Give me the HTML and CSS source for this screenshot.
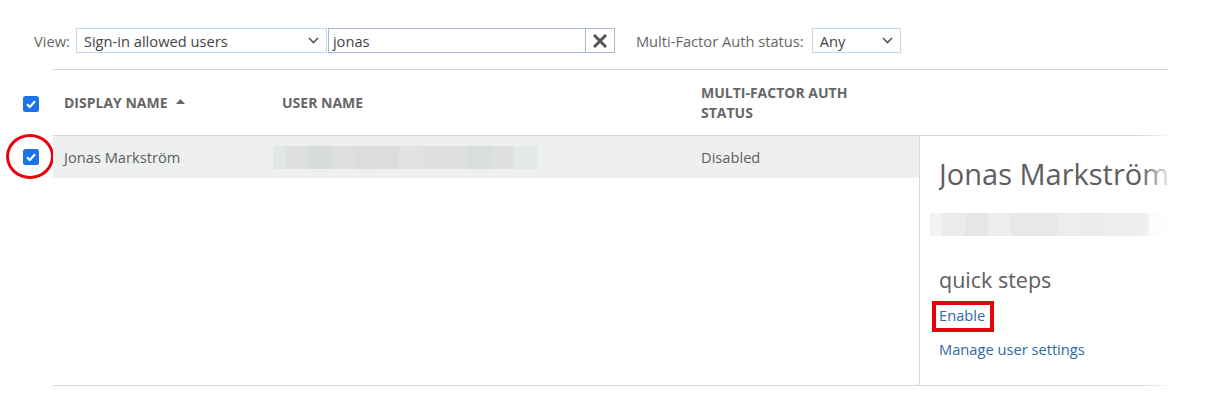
FILE: index.html
```html
<!DOCTYPE html>
<html>
<head>
<meta charset="utf-8">
<link rel="stylesheet" href="styles.css">
</head>
<body>
<div class="page">
  <div class="toolbar">
    <span class="label">View:</span>
    <div class="select select-view">
      <span>Sign-in allowed users</span>
      <svg class="chev" width="11" height="7" viewBox="0 0 11 7"><polyline points="1,1 5.5,5.5 10,1" fill="none" stroke="#555" stroke-width="1.6"/></svg>
    </div>
    <div class="search">
      <span class="search-text">jonas</span>
      <span class="search-clear"><svg width="14" height="14" viewBox="0 0 14 14"><path d="M2 2L12 12M12 2L2 12" stroke="#555" stroke-width="3" stroke-linecap="square"/></svg></span>
    </div>
    <span class="label label-mfa">Multi-Factor Auth status:</span>
    <div class="select select-any">
      <span>Any</span>
      <svg class="chev" width="11" height="7" viewBox="0 0 11 7"><polyline points="1,1 5.5,5.5 10,1" fill="none" stroke="#555" stroke-width="1.6"/></svg>
    </div>
  </div>

  <div class="grid">
    <div class="head-check">
      <span class="cb"><svg width="16" height="16" viewBox="0 0 16 16"><rect width="16" height="16" rx="2.5" fill="#1a73e8"/><path d="M4 8.2L6.8 11L12 5.2" fill="none" stroke="#fff" stroke-width="2.2"/></svg></span>
    </div>
    <div class="head">
      <div class="col col-name">DISPLAY NAME <svg class="sort" width="9" height="5" viewBox="0 0 9 5"><path d="M0 5L4.5 0L9 5Z" fill="#666"/></svg></div>
      <div class="col col-user">USER NAME</div>
      <div class="col col-mfa">MULTI-FACTOR AUTH<br>STATUS</div>
    </div>

    <div class="body-check">
      <span class="cb cb-row"><svg width="16" height="16" viewBox="0 0 16 16"><rect width="16" height="16" rx="2.5" fill="#1a73e8"/><path d="M4 8.2L6.8 11L12 5.2" fill="none" stroke="#fff" stroke-width="2.2"/></svg><span class="ring"></span></span>
    </div>
    <div class="body">
      <div class="list">
        <div class="row">
          <div class="col col-name">Jonas Markström</div>
          <div class="col col-user">
            <div class="blur blur-user">
              <i style="width:12px;background:#e3e6e6"></i><i style="background:#dedfde"></i><i style="background:#d9dcdc"></i><i style="background:#dedfde"></i><i style="background:#dbdddc"></i><i style="background:#dbdedd"></i><i style="background:#e1e3e2"></i><i style="background:#dfe0df"></i><i style="background:#dedfde"></i><i style="background:#dadddd"></i><i style="background:#dfe1e0"></i><i style="background:#e5e8e8"></i>
            </div>
          </div>
          <div class="col col-mfa">Disabled</div>
        </div>
      </div>
      <aside class="panel">
        <h1 class="panel-title">Jonas Markström</h1>
        <div class="blur blur-panel">
          <i style="width:12px;background:#f3f3f3"></i><i style="background:#ebebeb"></i><i style="background:#e6e6e6"></i><i style="background:#ededeb"></i><i style="background:#e8e8e8"></i><i style="background:#e8e8e8"></i><i style="background:#ededed"></i><i style="background:#ebebeb"></i><i style="background:#eeeeee"></i><i style="background:#eeeeee"></i><i style="background:#fafafa"></i>
        </div>
        <h2 class="panel-sub">quick steps</h2>
        <div class="links">
          <a class="link link-enable">Enable</a>
          <a class="link">Manage user settings</a>
        </div>
      </aside>
      <div class="fade"></div>
    </div>
  </div>
</div>
</body>
</html>
```
FILE: styles.css
```css
* { box-sizing: border-box; }
html, body { margin: 0; padding: 0; background: #fff; }
body {
  font-family: "Open Sans", "Noto Sans", sans-serif;
  color: #5e5e5e;
  width: 1205px;
  height: 418px;
  overflow: hidden;
}
.page { padding-top: 28px; }

.toolbar {
  display: flex;
  align-items: center;
  padding-left: 34px;
  height: 25px;
  font-size: 14.67px;
}
.label { color: #666; }
.select {
  height: 25px;
  border: 1px solid #c3d9ec;
  display: flex;
  align-items: center;
  justify-content: space-between;
  padding: 0 7px 0 7px;
  color: #444;
}
.select-view { width: 251px; margin-left: 6px; }
.select-any { width: 89px; margin-left: 8px; }
.search {
  width: 287px;
  height: 25px;
  margin-left: 1px;
  border: 1px solid #a8bacb;
  display: flex;
  align-items: center;
  justify-content: space-between;
}
.search-text { padding-left: 4px; color: #444; }
.search-clear {
  width: 29px;
  height: 23px;
  border-left: 1px solid #a8bacb;
  display: flex;
  align-items: center;
  justify-content: center;
}
.label-mfa { margin-left: 21px; }

.grid {
  display: grid;
  grid-template-columns: 53px 1115px;
  margin-top: 16px;
}
.head-check, .body-check {
  display: flex;
  justify-content: flex-end;
  padding-right: 14px;
}
.head-check { align-items: center; padding-top: 2px; }
.body-check { align-items: flex-start; padding-top: 13px; }
.cb { display: block; width: 16px; height: 16px; position: relative; }
.cb svg { display: block; }
.ring {
  position: absolute;
  left: -17px;
  top: -15px;
  width: 48px;
  height: 45px;
  border: 3.5px solid #e8000b;
  border-radius: 50%;
}

.head {
  height: 67px;
  border-top: 1px solid #d4d9dc;
  border-bottom: 1px solid #d4d9dc;
  display: flex;
  align-items: center;
  font-size: 14px;
  font-weight: 700;
  color: #666;
  line-height: 20px;
}
.col { padding-left: 11px; }
.col-name { width: 218px; display: flex; align-items: center; }
.col-user { width: 419px; }
.col-mfa { width: 229px; }
.sort { margin-left: 8px; margin-top: -2px; }

.body {
  display: flex;
  height: 250px;
  border-bottom: 1px solid #d4d9dc;
  position: relative;
}
.list { width: 866px; }
.row {
  height: 42px;
  background: #edf0ef;
  display: flex;
  align-items: center;
  font-size: 14.67px;
  color: #5e5e5e;
}
.row .col-user { padding-left: 2px; }
.blur { display: flex; height: 23px; }
.blur i { display: block; width: 23px; height: 23px; }
.blur-user { width: 264px; }

.panel {
  width: 249px;
  border-left: 1px solid #d4d9dc;
  padding-left: 19px;
}
.panel-title {
  margin: 19px 0 0 0;
  font-size: 29px;
  font-weight: 400;
  line-height: 38px;
  color: #5e5e5e;
  white-space: nowrap;
  overflow: hidden;
  width: 232px;
}
.blur-panel { margin: 20px 0 0 -9px; width: 242px; }
.panel-sub {
  margin: 30px 0 0 0;
  font-size: 21.5px;
  font-weight: 400;
  line-height: 28px;
  color: #5e5e5e;
}
.links { display: flex; flex-direction: column; align-items: flex-start; }
.link {
  font-size: 14.67px;
  color: #2f6aa3;
  line-height: 20px;
}
.link-enable {
  margin: 7px 0 0 -7px;
  padding: 0 5px 3px 3px;
  border: 4px solid #e8000b;
}
.link-enable + .link { margin-top: 7px; }

.fade {
  position: absolute;
  right: -6px;
  top: -2px;
  bottom: -2px;
  width: 34px;
  background: linear-gradient(to right, rgba(255,255,255,0), #fff);
  pointer-events: none;
}
```
